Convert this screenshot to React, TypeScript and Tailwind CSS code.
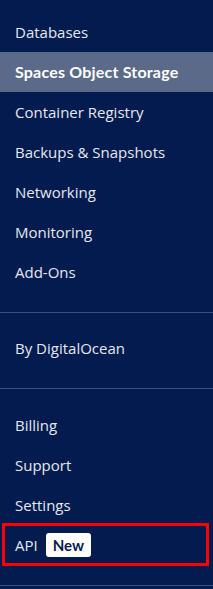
const topItems = [
  'Databases',
  'Spaces Object Storage',
  'Container Registry',
  'Backups & Snapshots',
  'Networking',
  'Monitoring',
  'Add-Ons',
];

const bottomItems = ['Billing', 'Support', 'Settings'];

function NavItem({ label, active }: { label: string; active?: boolean }) {
  return (
    <div
      className={
        active
          ? 'flex h-[40px] items-center px-[15px] bg-[#5b6a89] text-white font-bold font-[Lato,sans-serif] text-[16px] tracking-[0.2px]'
          : 'flex h-[40px] items-center px-[15px] text-[#e4e8f0]'
      }
    >
      {label}
    </div>
  );
}

export default function App() {
  return (
    <div
      className="h-[589px] w-full overflow-hidden bg-[#031b4e] text-[15px] leading-none"
      style={{ fontFamily: '"Open Sans", "Liberation Sans", sans-serif' }}
    >
      {/* ── Products ─────────────────────────────── */}
      <div className="pt-[12px] pb-5">
        {topItems.map((label) => (
          <NavItem key={label} label={label} active={label === 'Spaces Object Storage'} />
        ))}
      </div>

      <div className="h-px bg-[#3a5080]" />

      <div className="pt-[15px] pb-5">
        <NavItem label="By DigitalOcean" />
      </div>

      <div className="h-px bg-[#3a5080]" />

      {/* ── Account ─────────────────────────────── */}
      <div className="pt-4 pb-5">
        {bottomItems.map((label) => (
          <NavItem key={label} label={label} />
        ))}
        <div className="relative flex h-[40px] items-center gap-[8px] px-[15px] text-[#e4e8f0]">
          API
          <span className="inline-flex h-[24px] items-center rounded-[3px] bg-white px-[7px] font-[Lato,sans-serif] text-[15px] font-bold text-[#031b4e]">
            New
          </span>
          {/* annotation box */}
          <span className="pointer-events-none absolute left-[2px] right-[4px] top-[-2px] bottom-[-1px] border-[3px] border-[#ff0000]" />
        </div>
      </div>

      <div className="h-px bg-[#3a5080]" />
    </div>
  );
}
